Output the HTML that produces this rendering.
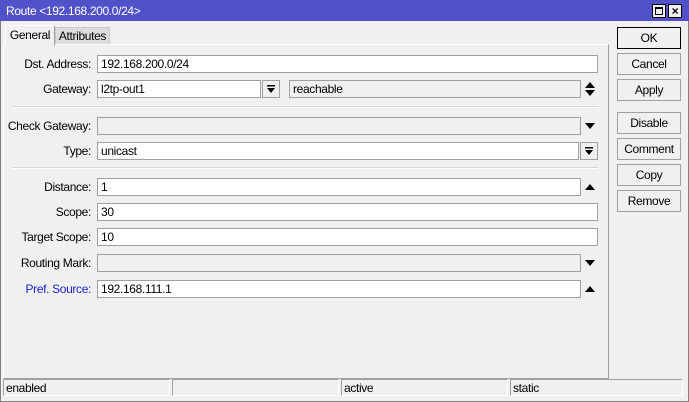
<!DOCTYPE html>
<html><head><meta charset="utf-8">
<style>
*{box-sizing:border-box;margin:0;padding:0}
body{width:689px;height:402px;background:#f0f0f0;font-family:"Liberation Sans",sans-serif;font-size:12px;letter-spacing:-0.35px;color:#000;position:relative;overflow:hidden}
.a{position:absolute}
.title{left:0;top:0;width:689px;height:21px;background:#5152c9;color:#fff;font-size:12px;line-height:23px;padding-left:6px}
.win{left:0;top:21px;width:689px;height:381px;border-left:1px solid #808080;border-right:1px solid #808080;border-bottom:1px solid #808080}
.tb{width:14px;height:14px;background:#f0f0f0;border:1px solid #000;top:4px}
.lbl{width:91px;text-align:right;line-height:19px;height:18px;left:0}
.f{height:18px;border:1px solid #a0a0a0;background:#fff;line-height:17px;padding-left:3px}
.g{background:#f0f0f0}
.btn{left:617px;width:64px;height:22px;border:1px solid #a0a0a0;background:#f0f0f0;text-align:center;line-height:21px}
.sep{left:12px;width:586px;height:2px;border-top:1px solid #d8d8d8;border-bottom:1px solid #fff}
.dd{width:18px;height:18px;border:1px solid #a0a0a0;background:#f0f0f0}
.st{top:379px;height:17px;border-top:1px solid #a0a0a0;border-left:1px solid #a0a0a0;border-right:1px solid #fff;border-bottom:1px solid #fff;line-height:17px;padding-left:2px}
</style></head><body>
<div class="a title">Route &lt;192.168.200.0/24&gt;</div>
<div class="a tb" style="left:652px"><div class="a" style="left:2px;top:2px;width:8px;height:8px;border:1px solid #000;border-top-width:2px"></div></div>
<div class="a tb" style="left:668px;font-size:12px;font-weight:bold;text-align:center;line-height:12px;color:#000">×</div>
<div class="a win"></div>

<div class="a" style="left:3px;top:44px;width:606px;height:335px;border:1px solid #a0a0a0;border-top-color:#fff;border-left-color:#fff"></div>
<div class="a" style="left:55px;top:27px;width:55px;height:17px;background:#dcdcdc;border:1px solid #c8c8c8;border-bottom:none;line-height:17px;text-align:center">Attributes</div>
<div class="a" style="left:5px;top:25px;width:50px;height:21px;background:#f0f0f0;border:1px solid #fff;border-right:1px solid #a0a0a0;border-bottom:none;line-height:19px;text-align:center">General</div>

<div class="a lbl" style="top:55px">Dst. Address:</div>
<div class="a f" style="left:97px;top:55px;width:501px">192.168.200.0/24</div>

<div class="a lbl" style="top:80px">Gateway:</div>
<div class="a f" style="left:97px;top:80px;width:164px">l2tp-out1</div>
<div class="a dd" style="left:262px;top:80px"><svg width="16" height="16" class="a" style="left:0;top:0"><rect x="4" y="4" width="8" height="1.5" fill="#000"/><path d="M4 7h8l-4 5z" fill="#000"/></svg></div>
<div class="a f g" style="left:289px;top:80px;width:292px">reachable</div>
<svg class="a" style="left:584px;top:80px" width="12" height="18"><path d="M1 8h10L6 2z M1 10h10l-5 6z" fill="#000"/></svg>

<div class="a sep" style="top:106px"></div>

<div class="a lbl" style="top:117px">Check Gateway:</div>
<div class="a f g" style="left:97px;top:117px;width:484px"></div>
<svg class="a" style="left:584px;top:117px" width="12" height="18"><path d="M1 6h10l-5 6z" fill="#000"/></svg>

<div class="a lbl" style="top:142px">Type:</div>
<div class="a f" style="left:97px;top:142px;width:482px">unicast</div>
<div class="a dd" style="left:580px;top:142px"><svg width="16" height="16" class="a" style="left:0;top:0"><rect x="4" y="4" width="8" height="1.5" fill="#000"/><path d="M4 7h8l-4 5z" fill="#000"/></svg></div>

<div class="a sep" style="top:167px"></div>

<div class="a lbl" style="top:178px">Distance:</div>
<div class="a f" style="left:97px;top:178px;width:484px">1</div>
<svg class="a" style="left:584px;top:178px" width="12" height="18"><path d="M1 12h10L6 6z" fill="#000"/></svg>

<div class="a lbl" style="top:203px">Scope:</div>
<div class="a f" style="left:97px;top:203px;width:501px">30</div>

<div class="a lbl" style="top:228px">Target Scope:</div>
<div class="a f" style="left:97px;top:228px;width:501px">10</div>

<div class="a lbl" style="top:254px">Routing Mark:</div>
<div class="a f g" style="left:97px;top:254px;width:484px"></div>
<svg class="a" style="left:584px;top:254px" width="12" height="18"><path d="M1 6h10l-5 6z" fill="#000"/></svg>

<div class="a lbl" style="top:280px;color:#2020d0">Pref. Source:</div>
<div class="a f" style="left:97px;top:280px;width:484px">192.168.111.1</div>
<svg class="a" style="left:584px;top:280px" width="12" height="18"><path d="M1 12h10L6 6z" fill="#000"/></svg>

<div class="a btn" style="top:27px;border-color:#000">OK</div>
<div class="a btn" style="top:53px">Cancel</div>
<div class="a btn" style="top:79px">Apply</div>
<div class="a btn" style="top:112px">Disable</div>
<div class="a btn" style="top:138px">Comment</div>
<div class="a btn" style="top:164px">Copy</div>
<div class="a btn" style="top:190px">Remove</div>

<div class="a st" style="left:3px;width:167px">enabled</div>
<div class="a st" style="left:172px;width:167px"></div>
<div class="a st" style="left:341px;width:167px">active</div>
<div class="a st" style="left:510px;width:173px">static</div>
</body></html>
